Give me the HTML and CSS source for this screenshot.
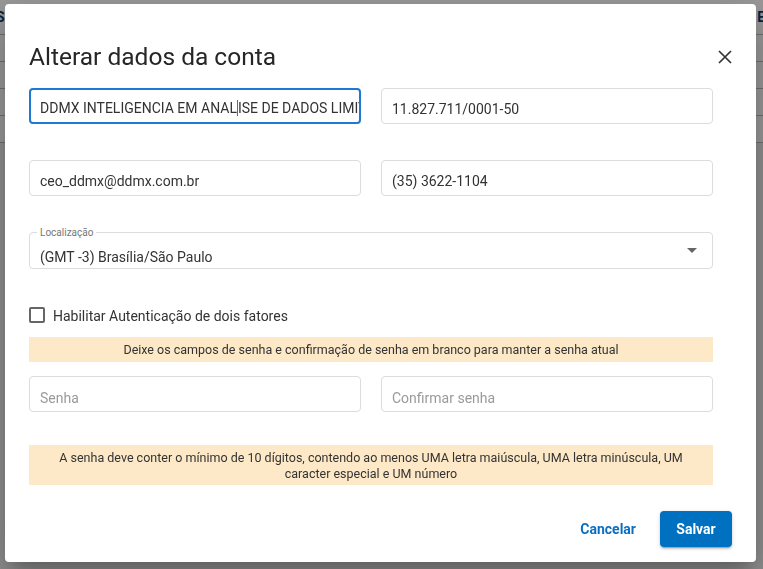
FILE: index.html
```html
<!DOCTYPE html>
<html lang="pt-BR">
<head>
<meta charset="utf-8">
<title>Alterar dados da conta</title>
<link rel="stylesheet" href="styles.css">
</head>
<body>
<div class="page">
  <div class="page-head"><span class="ph-left">S</span><span class="ph-right">E</span></div>
  <div class="page-row"></div>
  <div class="page-row"></div>
  <div class="page-row"></div>
  <div class="page-row"></div>
</div>
<div class="overlay">
  <div class="modal">
    <div class="modal-head">
      <h1 class="title">Alterar dados da conta</h1>
      <button class="close" aria-label="Fechar">
        <svg width="14" height="14" viewBox="0 0 14 14"><path d="M1 1 L13 13 M13 1 L1 13" stroke="#333" stroke-width="1.7" fill="none"/></svg>
      </button>
    </div>
    <div class="form">
      <div class="row">
        <div class="field focused"><span class="val">DDMX INTELIGENCIA EM ANAL<span class="caret"></span>ISE DE DADOS LIMITADA</span></div>
        <div class="field"><span class="val">11.827.711/0001-50</span></div>
      </div>
      <div class="row">
        <div class="field"><span class="val">ceo_ddmx@ddmx.com.br</span></div>
        <div class="field"><span class="val">(35) 3622-1104</span></div>
      </div>
      <div class="select">
        <span class="legend">Localização</span>
        <span class="val">(GMT -3) Brasília/São Paulo</span>
        <svg class="arrow" width="10" height="5" viewBox="0 0 10 5"><path d="M0 0 L10 0 L5 5 Z" fill="#666"/></svg>
      </div>
      <label class="check"><span class="box"></span><span>Habilitar Autenticação de dois fatores</span></label>
      <div class="notice one">Deixe os campos de senha e confirmação de senha em branco para manter a senha atual</div>
      <div class="row pass-row">
        <div class="field pass"><span class="ph">Senha</span></div>
        <div class="field pass"><span class="ph">Confirmar senha</span></div>
      </div>
      <div class="notice two">A senha deve conter o mínimo de 10 dígitos, contendo ao menos UMA letra maiúscula, UMA letra minúscula, UM<br>caracter especial e UM número</div>
    </div>
    <div class="actions">
      <button class="btn-text">Cancelar</button>
      <button class="btn-primary">Salvar</button>
    </div>
  </div>
</div>
</body>
</html>
```
FILE: styles.css
```css
* { box-sizing: border-box; }
html, body { margin: 0; padding: 0; }
body {
  width: 763px; height: 569px; overflow: hidden;
  font-family: Roboto, "Noto Sans", sans-serif;
  color: #333;
  background: #f0f0f0;
}
.page { background: #fff; }
.page-head {
  height: 35px; display: flex; justify-content: space-between; align-items: center;
  border-bottom: 1px solid #bbb; font-weight: 700; color: #0d3a6a; font-size: 14px;
}
.ph-left { margin-left: -4px; }
.ph-right { margin-right: -2px; }
.page-row { height: 27px; border-bottom: 1px solid #bbb; }

.overlay {
  position: fixed; inset: 0;
  background: rgba(0,0,0,0.4);
  display: flex; align-items: flex-start; justify-content: flex-start;
}
.modal {
  margin: 4px 0 0 5px;
  width: 751px; height: 558px;
  background: #fff; border-radius: 4px;
  box-shadow: 0 11px 15px -7px rgba(0,0,0,.2), 0 24px 38px 3px rgba(0,0,0,.14), 0 9px 46px 8px rgba(0,0,0,.12);
  padding: 0 24px;
  display: flex; flex-direction: column;
}
.modal-head {
  display: flex; justify-content: space-between; align-items: center;
  height: 84px; padding-top: 21px;
}
.title { margin: 0; font-size: 24.5px; font-weight: 400; color: #262626; }
.close {
  border: 0; background: none; padding: 0; width: 14px; height: 14px;
  display: flex;
}
.form { width: 684px; display: flex; flex-direction: column; }
.row { display: flex; gap: 20px; margin-bottom: 36px; }
.field {
  flex: 1; height: 36px; border: 1px solid #dcdcdc; border-radius: 4px;
  display: flex; align-items: center; padding: 5px 10px 0; font-size: 14px; overflow: hidden;
  white-space: nowrap;
}
.field.pass { padding-top: 7px; }
.field.focused { border: 2px solid #1f78d1; padding: 4px 9px 0; }
.caret { display: inline-block; width: 1px; height: 16px; background: #1f78d1; vertical-align: -3px; }
.ph { color: #9a9a9a; }
.select {
  position: relative; height: 37px; border: 1px solid #dcdcdc; border-radius: 4px;
  display: flex; align-items: center; padding: 13px 10px 0; font-size: 14px; margin-bottom: 38px;
}
.legend {
  position: absolute; left: 7px; top: -6px; background: #fff; padding: 0 3px;
  font-size: 10px; color: #777; line-height: 12px;
}
.select .arrow { position: absolute; right: 15px; top: 15px; }
.check { display: flex; align-items: center; gap: 8px; font-size: 14px; height: 16px; margin-bottom: 14px; }
.check span:last-child { padding-top: 1px; }
.box { width: 16px; height: 16px; border: 2px solid #666; border-radius: 2px; }
.notice { background: #fde9c8; text-align: center; font-size: 12.5px; color: #333; }
.notice.one { height: 25px; line-height: 26px; margin-bottom: 14px; }
.row.pass-row { margin-bottom: 33px; }
.notice.two { padding: 5px 0 3px; line-height: 16px; }
.actions { display: flex; justify-content: flex-end; align-items: center; gap: 12px; margin-top: 26px; }
.btn-text {
  border: 0; background: none; font: inherit; font-size: 14px; font-weight: 700; color: #0a6fc2;
  height: 36px; padding: 0 12px;
}
.btn-primary {
  border: 0; font: inherit; font-size: 14px; font-weight: 700; color: #fff; background: #0070c0;
  width: 72px; height: 36px; border-radius: 4px;
  box-shadow: 0 3px 1px -2px rgba(0,0,0,.2), 0 2px 2px 0 rgba(0,0,0,.14), 0 1px 5px 0 rgba(0,0,0,.12);
}
```
